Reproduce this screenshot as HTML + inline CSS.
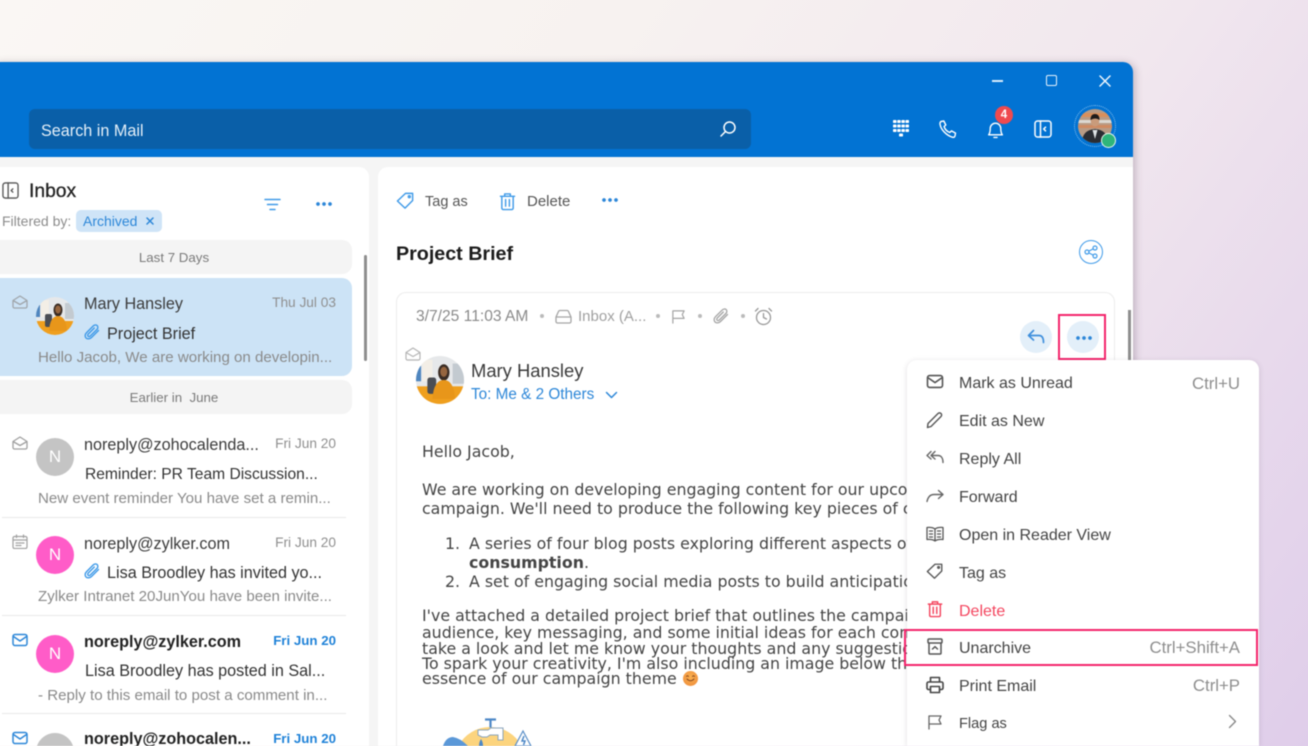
<!DOCTYPE html>
<html><head><meta charset="utf-8">
<style>
html,body{margin:0;padding:0;width:1308px;height:746px;overflow:hidden}
body{position:relative;font-family:"Liberation Sans",sans-serif;background:linear-gradient(125deg,#faf7f4 0%,#f7f2f0 35%,#f1e7ee 65%,#dfcdea 100%)}
#root{position:absolute;left:-10px;top:0;width:1318px;height:746px;overflow:hidden;filter:blur(.4px)}
#in{position:absolute;left:10px;top:0;width:1308px;height:746px}
.a{position:absolute}
.t{position:absolute;white-space:nowrap;line-height:20px;height:20px}
svg.i{position:absolute;fill:none;stroke-linecap:round;stroke-linejoin:round}
.name{font-size:16.2px;color:#3b3b3b;left:84px}
.subj{font-size:16.2px;color:#333}
.prev{font-size:15.1px;color:#8a8a8a;left:38px}
.date{font-size:13.7px;color:#8f8f8f;right:972px}
.bd{font-size:13.3px;color:#1f82d8;font-weight:bold}
.body{font-family:"DejaVu Sans","Liberation Sans",sans-serif;font-size:15.8px;color:#444;position:absolute;white-space:nowrap;line-height:20px;height:20px;left:422px}
.m{font-size:16px;color:#444;left:959px}
.k{font-size:16.8px;color:#8e8e8e;right:68px}
.grp{position:absolute;left:-10px;width:362px;background:#f4f4f4;border-radius:10px;text-align:center;color:#7a7a7a;font-size:13.3px;padding-left:6px;box-sizing:border-box}
.sep{position:absolute;left:2px;width:344px;height:1px;background:#e8e8e8}
.av{position:absolute;width:38px;height:38px;border-radius:50%;color:#fff;text-align:center;line-height:38px;font-size:17px}
</style></head><body><div id="root"><div id="in">
<svg width="0" height="0" style="position:absolute">
<symbol id="mailo" viewBox="0 0 16 14"><path d="M1 5.5 8 1l7 4.500V11.500a1.500 1.500 0 0 1-1.500 1.500h-11A1.500 1.500 0 0 1 1 11.500Z M1 5.500 8 9.500l7-4"/></symbol>
<symbol id="mailc" viewBox="0 0 16 14"><rect x="1" y="1.500" width="14" height="11" rx="2"/><path d="M1.500 3.500 8 8l6.500-4.500"/></symbol>
<symbol id="clip" viewBox="0 0 18 18"><path d="M15.500 7.500 8.500 14.500c-1.700 1.700-4.300 1.700-5.500.5s-1.200-3.600.5-5.300l6.800-6.800c1.200-1.200 3-1.200 3.900-.3s.9 2.700-.3 3.900L7.300 13c-.7.700-1.700.7-2.200.2s-.5-1.500.2-2.200l6-6"/></symbol>
<symbol id="tag" viewBox="0 0 20 20"><path d="M1.500 10.500 10 2.500h7.500V10l-8 8z"/><circle cx="14" cy="6" r="1"/></symbol>
<symbol id="trash" viewBox="0 0 18 20"><path d="M1.500 4.500h15M6 4.500V2h6v2.500M3 4.500V17a1.500 1.500 0 0 0 1.500 1.500h9A1.500 1.500 0 0 0 15 17V4.500M7 8v7M11 8v7"/></symbol>
<symbol id="flag" viewBox="0 0 16 16"><path d="M2 15V2h12l-2 4 2 4H2"/></symbol>
<symbol id="panel" viewBox="0 0 18 18"><rect x="1" y="1" width="16" height="16" rx="2.500"/><path d="M6.500 1v16M11.500 7.200 9.700 9l1.800 1.800"/></symbol>
<symbol id="mary" viewBox="0 0 38 38"><clipPath id="cm"><circle cx="19" cy="19" r="19"/></clipPath><g clip-path="url(#cm)" stroke="none"><rect width="38" height="38" fill="#e6e8ea"/><rect x="0" y="8" width="4" height="12" fill="#4f86bf"/><rect x="29" y="6" width="9" height="16" fill="#c3cad0"/><rect x="5" y="3" width="8" height="17" fill="#f3eee6"/><rect x="0" y="24" width="38" height="14" fill="#ef9f1e"/><rect x="9" y="17" width="7" height="13" rx="2" fill="#4a4d54"/><ellipse cx="22" cy="13" rx="4.500" ry="6.500" fill="#3a2c24"/><ellipse cx="22" cy="12.500" rx="2.800" ry="4" fill="#96653f"/><path d="M13 34q1-15 9-15t9 15z" fill="#e8961a"/></g></symbol>
</svg>

<!-- window -->
<div class="a" style="left:-10px;top:62px;width:1143px;height:684px;background:#f5f5f5;border-radius:10px 10px 0 0;box-shadow:2px 1px 8px rgba(80,60,80,.3)"></div>
<div class="a" style="left:-10px;top:62px;width:1143px;height:95px;background:#0273d3;border-radius:10px 10px 0 0"></div>

<!-- window ctl -->
<div class="a" style="left:992px;top:80px;width:11px;height:1.500px;background:#d9ecfb"></div>
<div class="a" style="left:1046px;top:75px;width:9px;height:9px;border:1.500px solid #e6f2fc;border-radius:2px"></div>
<svg class="i" style="left:1099px;top:75px;stroke:#eef6fd;stroke-width:1.500" width="12" height="12" viewBox="0 0 12 12"><path d="M1 1l10 10M11 1 1 11"/></svg>

<!-- search -->
<div class="a" style="left:29px;top:109px;width:722px;height:40px;background:#0a5fa8;border-radius:6px"></div>
<div class="t" style="left:41px;top:121px;font-size:16.2px;color:#e4eff8">Search in Mail</div>
<svg class="i" style="left:719px;top:120px;stroke:#fff;stroke-width:1.500" width="18" height="18" viewBox="0 0 18 18"><circle cx="10.500" cy="7.500" r="5.500"/><path d="M6.500 11.500 2 16"/></svg>

<!-- head icons -->
<svg class="i" style="left:893px;top:120px" width="16" height="17" viewBox="0 0 16 17"><g fill="#fff" stroke="none"><rect x="0" y="0" width="3.500" height="3" rx=".8"/><rect x="4.200" y="0" width="3.500" height="3" rx=".8"/><rect x="8.400" y="0" width="3.500" height="3" rx=".8"/><rect x="12.500" y="0" width="3.500" height="3" rx=".8"/><rect x="0" y="4.500" width="3.500" height="3" rx=".8"/><rect x="4.200" y="4.500" width="3.500" height="3" rx=".8"/><rect x="8.400" y="4.500" width="3.500" height="3" rx=".8"/><rect x="12.500" y="4.500" width="3.500" height="3" rx=".8"/><rect x="0" y="9" width="3.500" height="3" rx=".8"/><rect x="4.200" y="9" width="3.500" height="3" rx=".8"/><rect x="8.400" y="9" width="3.500" height="3" rx=".8"/><rect x="12.500" y="9" width="3.500" height="3" rx=".8"/><rect x="6" y="13.500" width="4" height="3" rx=".8"/></g></svg>
<svg class="i" style="left:939px;top:120px;stroke:#fff;stroke-width:1.400" width="18" height="18" viewBox="0 0 18 18"><path d="M2 1.500 4.800 1l2 4-1.700 1.500c.8 2.800 3 5 5.700 6l1.700-1.600 4 2.200-.5 2.800c-.3 1-1.300 1.600-2.300 1.400C7 15.200 1.700 9.200 1 4.200.9 3 1.200 2 2 1.500z"/></svg>
<svg class="i" style="left:987px;top:120px;stroke:#fff;stroke-width:1.300" width="17" height="19" viewBox="0 0 16 18"><path d="M1.500 14c1.200-1.500 1.500-3 1.500-6a5 5 0 0 1 10 0c0 3 .3 4.500 1.500 6zM6.500 16.500h3"/></svg>
<div class="a" style="left:995px;top:106px;width:18px;height:18px;border-radius:50%;background:#ef4a4f;color:#fff;font-size:11.500px;font-weight:bold;text-align:center;line-height:18px">4</div>
<svg class="i" style="left:1034px;top:120px;stroke:#fff;stroke-width:1.500" width="18" height="18"><use href="#panel"/></svg>
<div class="a" style="left:1074px;top:105px;width:42px;height:42px;box-sizing:border-box;border:1px dotted #8cc3ef;border-radius:50%"></div>
<svg class="a" style="left:1078px;top:109px" width="34" height="34" viewBox="0 0 34 34"><clipPath id="cj"><circle cx="17" cy="17" r="17"/></clipPath><g clip-path="url(#cj)"><rect width="34" height="34" fill="#b89b85"/><rect y="4" width="34" height="4" fill="#d88f5c"/><rect y="11" width="34" height="3" fill="#dcd8d2"/><rect y="16" width="34" height="3" fill="#cf8b62"/><path d="M4 34q0-13 13-14 13 1 13 14z" fill="#2b2d33"/><path d="M14.500 21h5l-2.500 9z" fill="#dfe3e6"/><ellipse cx="17" cy="12" rx="4.300" ry="5.500" fill="#c99b7b"/><path d="M12.500 11q0-6 4.500-6t4.500 6q-4-3-9 0z" fill="#1d1a1a"/></g></svg>
<div class="a" style="left:1101px;top:133px;width:15px;height:15px;box-sizing:border-box;border-radius:50%;background:#2fb57a;border:1.500px solid #e8f4ee"></div>

<!-- left panel -->
<div class="a" style="left:-10px;top:167px;width:379px;height:579px;background:#fff;border-radius:10px 10px 0 0"></div>
<svg class="i" style="left:2px;top:182px;stroke:#555;stroke-width:1.400" width="17" height="17"><use href="#panel"/></svg>
<div class="t" style="left:29px;top:182px;font-size:19.3px;color:#222;-webkit-text-stroke:.3px #222">Inbox</div>
<div class="t" style="left:2px;top:211px;font-size:14px;color:#8d8d8d">Filtered by:</div>
<div class="a" style="left:76px;top:210px;width:86px;height:22px;background:#cfe4f7;border-radius:5px"></div>
<div class="t" style="left:83px;top:211px;font-size:14px;color:#2d87d8">Archived</div>
<svg class="i" style="left:146px;top:217px;stroke:#2d87d8;stroke-width:1.500" width="8" height="8" viewBox="0 0 8 8"><path d="M1 1l6 6M7 1 1 7"/></svg>
<svg class="i" style="left:264px;top:198px;stroke:#3f9ae8;stroke-width:1.500" width="17" height="14" viewBox="0 0 17 14"><path d="M1 1.500h15M3.500 6.500h10M6 11.500h5"/></svg>
<div class="a" style="left:316px;top:202px;width:16px;height:4px;background:radial-gradient(circle at 2px 2px,#2d87d8 1.700px,transparent 2px) 0 0/6px 4px"></div>

<div class="grp" style="top:240px;height:34px;line-height:35px">Last 7 Days</div>
<div class="a" style="left:-10px;top:278px;width:362px;height:98px;background:#cce3f6;border-radius:10px"></div>
<div class="a" style="left:364px;top:255px;width:3px;height:106px;background:#8e8e8e;border-radius:2px"></div>

<svg class="i" style="left:12px;top:295px;stroke:#a0a6ab;stroke-width:1.300" width="16" height="14"><use href="#mailo"/></svg>
<svg class="a" style="left:36px;top:297px" width="38" height="38"><use href="#mary"/></svg>
<div class="t name" style="top:294px">Mary Hansley</div>
<div class="t date" style="top:293px">Thu Jul 03</div>
<svg class="i" style="left:83px;top:323px;stroke:#3f9ae8;stroke-width:1.400" width="18" height="18"><use href="#clip"/></svg>
<div class="t subj" style="left:107px;top:324px">Project Brief</div>
<div class="t prev" style="top:348px">Hello Jacob, We are working on developin...</div>

<div class="grp" style="top:380px;height:34px;line-height:36px">Earlier in&nbsp; June</div>

<svg class="i" style="left:12px;top:436px;stroke:#a0a0a0;stroke-width:1.300" width="16" height="14"><use href="#mailo"/></svg>
<div class="av" style="left:36px;top:438px;background:#c4c4c4">N</div>
<div class="t name" style="top:435px">noreply@zohocalenda...</div>
<div class="t date" style="top:434px">Fri Jun 20</div>
<div class="t subj" style="left:85px;top:465px;font-size:15.6px">Reminder: PR Team Discussion...</div>
<div class="t prev" style="top:489px">New event reminder You have set a remin...</div>
<div class="sep" style="top:517px"></div>

<svg class="i" style="left:12px;top:534px;stroke:#a0a0a0;stroke-width:1.200" width="16" height="15" viewBox="0 0 16 15"><rect x="1" y="2.500" width="14" height="12" rx="1.500"/><path d="M1 6h14M4.500 1v2.500M11.500 1v2.500M4 9h2M7 9h2M10 9h2M4 11.500h2M7 11.500h2"/></svg>
<div class="av" style="left:36px;top:536px;background:#ff5cc8">N</div>
<div class="t name" style="top:534px">noreply@zylker.com</div>
<div class="t date" style="top:533px">Fri Jun 20</div>
<svg class="i" style="left:83px;top:562px;stroke:#3f9ae8;stroke-width:1.400" width="18" height="18"><use href="#clip"/></svg>
<div class="t subj" style="left:107px;top:563px">Lisa Broodley has invited yo...</div>
<div class="t prev" style="top:587px">Zylker Intranet 20JunYou have been invite...</div>
<div class="sep" style="top:615px"></div>

<svg class="i" style="left:12px;top:633px;stroke:#2d87d8;stroke-width:1.500" width="16" height="14"><use href="#mailc"/></svg>
<div class="av" style="left:36px;top:635px;background:#ff5cc8">N</div>
<div class="t" style="left:84px;top:632px;font-size:16.2px;font-weight:bold;color:#222">noreply@zylker.com</div>
<div class="t date bd" style="top:631px">Fri Jun 20</div>
<div class="t subj" style="left:85px;top:661px">Lisa Broodley has posted in Sal...</div>
<div class="t prev" style="top:686px">- Reply to this email to post a comment in...</div>
<div class="sep" style="top:713px"></div>

<svg class="i" style="left:12px;top:731px;stroke:#2d87d8;stroke-width:1.500" width="16" height="14"><use href="#mailc"/></svg>
<svg class="a" style="left:36px;top:733px" width="38" height="13" viewBox="0 0 38 13"><path d="M.97 13A19 19 0 0 1 37.030 13Z" fill="#c4c4c4"/></svg>
<div class="t" style="left:84px;top:732px;font-size:16.2px;font-weight:bold;color:#222;height:14px;line-height:14px;overflow:hidden">noreply@zohocalen...</div>
<div class="t date bd" style="top:732px;height:14px;line-height:14px;overflow:hidden">Fri Jun 20</div>

<!-- right panel -->
<div class="a" style="left:378px;top:167px;width:755px;height:579px;background:#fff;border-radius:10px 0 0 0"></div>
<svg class="i" style="left:396px;top:191px;stroke:#3f9ae8;stroke-width:1.500" width="19" height="19"><use href="#tag"/></svg>
<div class="t" style="left:425px;top:192px;font-size:14.500px;color:#555">Tag as</div>
<svg class="i" style="left:499px;top:192px;stroke:#3f9ae8;stroke-width:1.500" width="17" height="19"><use href="#trash"/></svg>
<div class="t" style="left:527px;top:192px;font-size:15px;color:#555">Delete</div>
<div class="a" style="left:602px;top:198px;width:16px;height:4px;background:radial-gradient(circle at 2px 2px,#2d87d8 1.700px,transparent 2px) 0 0/6px 4px"></div>
<div class="t" style="left:396px;top:244px;font-size:19.7px;font-weight:bold;color:#1c1c1c">Project Brief</div>
<div class="a" style="left:1079px;top:240px;width:24px;height:24px;box-sizing:border-box;border:1.300px solid #3f9ae8;border-radius:50%"></div>
<svg class="i" style="left:1084px;top:245px;stroke:#3f9ae8;stroke-width:1.200" width="14" height="14" viewBox="0 0 14 14"><circle cx="3" cy="7" r="2"/><circle cx="11" cy="3" r="2"/><circle cx="11" cy="11" r="2"/><path d="M4.800 6.100 9.200 3.900M4.800 7.900l4.400 2.200"/></svg>

<div class="a" style="left:396px;top:292px;width:719px;height:454px;box-sizing:border-box;border:1px solid #ececec;border-bottom:none;border-radius:10px 10px 0 0"></div>
<div class="a" style="left:1128px;top:310px;width:2.500px;height:60px;background:#8e8e8e"></div>

<div class="t" style="left:416px;top:307px;font-size:15.6px;color:#8a8a8a">3/7/25 11:03 AM</div>
<div class="a" style="left:540px;top:314px;width:4px;height:4px;border-radius:50%;background:#bbb"></div>
<svg class="i" style="left:555px;top:309px;stroke:#a5a5a5;stroke-width:1.300" width="17" height="15" viewBox="0 0 17 15"><path d="M1 8 3.500 2.500a1.500 1.500 0 0 1 1.300-1h7.400a1.500 1.500 0 0 1 1.300 1L16 8v4.500a1.500 1.500 0 0 1-1.500 1.500h-12A1.500 1.500 0 0 1 1 12.500ZM1 8h15"/></svg>
<div class="t" style="left:578px;top:307px;font-size:15px;color:#a0a0a0">Inbox (A...</div>
<div class="a" style="left:656px;top:314px;width:4px;height:4px;border-radius:50%;background:#bbb"></div>
<svg class="i" style="left:671px;top:309px;stroke:#a5a5a5;stroke-width:1.300" width="15" height="15"><use href="#flag"/></svg>
<div class="a" style="left:698px;top:314px;width:4px;height:4px;border-radius:50%;background:#bbb"></div>
<svg class="i" style="left:712px;top:307px;stroke:#a5a5a5;stroke-width:1.300" width="18" height="18"><use href="#clip"/></svg>
<div class="a" style="left:741px;top:314px;width:4px;height:4px;border-radius:50%;background:#bbb"></div>
<svg class="i" style="left:754px;top:307px;stroke:#999;stroke-width:1.300" width="19" height="19" viewBox="0 0 19 19"><circle cx="9.500" cy="10.500" r="7"/><path d="M9.500 6.500v4l3 1.500M1.500 4 4 1.500M17.500 4 15 1.500"/></svg>

<svg class="i" style="left:405px;top:347px;stroke:#b5b5b5;stroke-width:1.200" width="16" height="14"><use href="#mailo"/></svg>
<svg class="a" style="left:416px;top:356px" width="48" height="48"><use href="#mary"/></svg>
<div class="t" style="left:471px;top:361px;font-size:18.4px;color:#3b3b3b">Mary Hansley</div>
<div class="t" style="left:471px;top:385px;font-size:15.3px;color:#2d87d8">To: Me &amp; 2 Others</div>
<svg class="i" style="left:605px;top:391px;stroke:#2d87d8;stroke-width:1.500" width="13" height="8" viewBox="0 0 13 8"><path d="M1.500 1.500 6.500 6.500l5-5"/></svg>

<div class="a" style="left:1020px;top:321px;width:32px;height:32px;border-radius:50%;background:#e3eff9"></div>
<svg class="i" style="left:1027px;top:329px;stroke:#3f8fdc;stroke-width:1.700" width="18" height="16" viewBox="0 0 18 16"><path d="M6.500 1.500 1.500 6.500l5 4.500M1.500 6.500H12c3 0 4.500 2.500 4.500 7"/></svg>
<div class="a" style="left:1067px;top:321px;width:32px;height:32px;border-radius:50%;background:#e3eff9"></div>
<div class="a" style="left:1076px;top:336px;width:16px;height:4px;background:radial-gradient(circle at 2px 2px,#2d87d8 1.700px,transparent 2px) 0 0/6px 4px"></div>
<div class="a" style="left:1058px;top:314px;width:48px;height:46px;box-sizing:border-box;border:2px solid #f4246c"></div>

<div class="body" style="top:442px">Hello Jacob,</div>
<div class="body" style="top:480px">We are working on developing engaging content for our upcoming</div>
<div class="body" style="top:499px">campaign. We'll need to produce the following key pieces of content:</div>
<div class="body" style="top:534px;left:445px">1.</div>
<div class="body" style="top:534px;left:469px">A series of four blog posts exploring different aspects of</div>
<div class="body" style="top:553px;left:469px"><b>consumption</b>.</div>
<div class="body" style="top:572px;left:445px">2.</div>
<div class="body" style="top:572px;left:469px">A set of engaging social media posts to build anticipation</div>
<div class="body" style="top:606px">I've attached a detailed project brief that outlines the campaign</div>
<div class="body" style="top:623px">audience, key messaging, and some initial ideas for each content</div>
<div class="body" style="top:639px">take a look and let me know your thoughts and any suggestions</div>
<div class="body" style="top:654px">To spark your creativity, I'm also including an image below that</div>
<div class="body" style="top:669px">essence of our campaign theme</div>
<div class="a" style="left:683px;top:671px;width:15px;height:15px;border-radius:50%;background:radial-gradient(circle at 50% 40%,#f9b04f,#ee8a3a)"></div>
<svg class="i" style="left:685px;top:674px;stroke:#8a4a20;stroke-width:1" width="11" height="9" viewBox="0 0 11 9"><path d="M1.500 2.500q1-1.500 2 0M7.500 2.500q1-1.500 2 0M2 5q3.500 3.500 7 0"/></svg>

<!-- illustration -->
<svg class="a" style="left:438px;top:714px" width="100" height="32" viewBox="0 0 100 32">
<path d="M20.300 32A36 36 0 0 1 83.700 32Z" fill="#fcd47e"/>
<path d="M40 21v-5h10l3-2h12v12h-5v-5h-8l-3 2h-5z" fill="#fff" stroke="#8ba4bb" stroke-width="1"/>
<path d="M47 5.500h11M52.500 5.500v8" stroke="#4d88c7" stroke-width="2.200" fill="none"/>
<path d="M41 32q0-4 2-7 2 3 2 7z" fill="#4d88c7"/>
<path d="M5 32q3-9 10-9 7 1 15 9z" fill="#5b98d8"/>
<path d="M93 32 85 17 77 32z" fill="#fff" stroke="#5b8fc8" stroke-width="1.200"/>
<path d="M86 22l-2 5h3l-1.500 4" stroke="#4d88c7" stroke-width="1.500" fill="none"/>
</svg>

<!-- menu -->
<div class="a" style="left:907px;top:360px;width:352px;height:386px;background:#fff;border-radius:10px 10px 0 0;box-shadow:0 1px 6px rgba(60,50,70,.16)"></div>

<svg class="i" style="left:926px;top:374px;stroke:#555;stroke-width:1.500" width="18" height="15"><use href="#mailc"/></svg>
<div class="t m" style="top:374px">Mark as Unread</div><div class="t k" style="top:374px">Ctrl+U</div>
<svg class="i" style="left:926px;top:411px;stroke:#555;stroke-width:1.400" width="18" height="18" viewBox="0 0 18 18"><path d="M2 12.500 12 2.500a1.800 1.800 0 0 1 3 3L5 15.500l-3.500 1z"/></svg>
<div class="t m" style="top:412px">Edit as New</div>
<svg class="i" style="left:926px;top:450px;stroke:#666;stroke-width:1.400" width="18" height="15" viewBox="0 0 18 15"><path d="M5 1.500 1 5.500l4 3.500M9 1.500 5 5.500l4 3.500M5.500 5.500H12c3 0 5 2.500 5 7"/></svg>
<div class="t m" style="top:450px">Reply All</div>
<svg class="i" style="left:926px;top:489px;stroke:#666;stroke-width:1.400" width="18" height="14" viewBox="0 0 18 14"><path d="M12.500 1.500l4.500 4-4.500 4M17 5.500H8c-4 0-6 2.500-7 7"/></svg>
<div class="t m" style="top:488px">Forward</div>
<svg class="i" style="left:926px;top:526px;stroke:#555;stroke-width:1.300" width="18" height="16" viewBox="0 0 18 16"><path d="M9 3C7 1.500 4 1.200 1 1.500v12c3-.3 6 0 8 1.500 2-1.500 5-1.800 8-1.500v-12C14 1.200 11 1.500 9 3zM9 3v12M3.500 5H6.500M3.500 8H6.500M3.500 11H6.500M11.500 5h3M11.500 8h3M11.500 11h3"/></svg>
<div class="t m" style="top:526px">Open in Reader View</div>
<svg class="i" style="left:926px;top:562px;stroke:#555;stroke-width:1.500" width="18" height="18"><use href="#tag"/></svg>
<div class="t m" style="top:564px">Tag as</div>
<svg class="i" style="left:927px;top:600px;stroke:#f4465f;stroke-width:1.600" width="16" height="18"><use href="#trash"/></svg>
<div class="t m" style="top:602px;color:#f4465f">Delete</div>
<svg class="i" style="left:927px;top:638px;stroke:#555;stroke-width:1.500" width="16" height="17" viewBox="0 0 16 17"><rect x="1" y="1" width="14" height="4" rx="1"/><path d="M2 5v10a1 1 0 0 0 1 1h10a1 1 0 0 0 1-1V5M5.500 11 8 8.700l2.500 2.300"/></svg>
<div class="t m" style="top:639px">Unarchive</div><div class="t k" style="top:638px">Ctrl+Shift+A</div>
<svg class="i" style="left:926px;top:676px;stroke:#444;stroke-width:1.600" width="18" height="18" viewBox="0 0 18 18"><path d="M4.500 6V1.500h9V6M4.500 13.500H2.500A1.500 1.500 0 0 1 1 12V7.500A1.500 1.500 0 0 1 2.500 6h13A1.500 1.500 0 0 1 17 7.500V12a1.500 1.500 0 0 1-1.500 1.500h-2M4.500 10.500h9v6h-9z"/></svg>
<div class="t m" style="top:677px">Print Email</div><div class="t k" style="top:676px">Ctrl+P</div>
<svg class="i" style="left:927px;top:714px;stroke:#666;stroke-width:1.300" width="16" height="16"><use href="#flag"/></svg>
<div class="t m" style="top:714px;font-size:14.6px">Flag as</div>
<svg class="i" style="left:1228px;top:714px;stroke:#888;stroke-width:1.400" width="9" height="15" viewBox="0 0 9 15"><path d="M1.500 1.500 7.500 7.500l-6 6"/></svg>

<div class="a" style="left:904px;top:629px;width:354px;height:37px;box-sizing:border-box;border:2px solid #f4246c"></div>
</div></div></body></html>
